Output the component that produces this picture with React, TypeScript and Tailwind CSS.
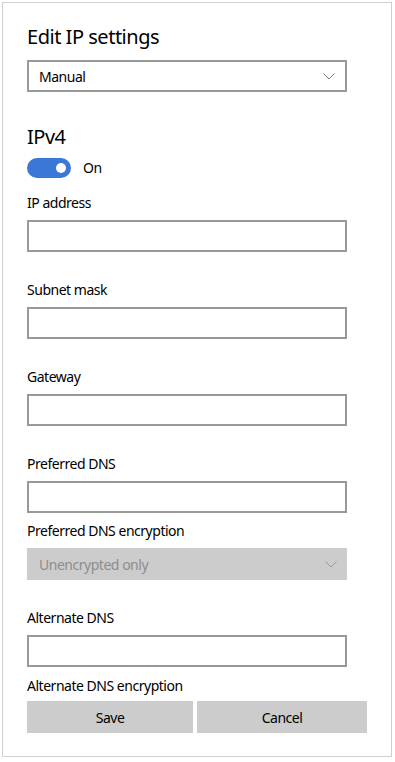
const FONT = "font-['Segoe_UI','Noto_Sans',sans-serif] tracking-[-0.03em]";

function Chevron({ className }: { className: string }) {
  return (
    <svg width="12" height="7" viewBox="0 0 12 7" className={className}>
      <path d="M0.5 0.5 L6 6 L11.5 0.5" fill="none" stroke="currentColor" strokeWidth="1" />
    </svg>
  );
}

function Field({ label, tight }: { label: string; tight?: boolean }) {
  return (
    <div className={tight ? "" : "mb-[28px]"}>
      <p className="h-5 text-[14px] leading-5">{label}</p>
      <div className="mt-[7px] h-8 w-[320px] border-2 border-[#999] bg-white" />
    </div>
  );
}

export default function App() {
  return (
    <div className={`h-[762px] w-[395px] bg-white pl-[2px] pr-[3px] pt-[2px] ${FONT} text-black`}>
      <div className="flex h-[755px] flex-col border border-[#cfcfcf] pl-[24px]">
        <h1 className="mt-[20px] h-7 text-[20px] leading-7">Edit IP settings</h1>

        <div className="mt-[9px] flex h-8 w-[320px] items-center justify-between border-2 border-[#999] pl-[10px] pr-[10px]">
          <span className="text-[14px]">Manual</span>
          <Chevron className="text-[#777]" />
        </div>

        <h2 className="mt-[31px] h-7 text-[20px] leading-7">IPv4</h2>

        <div className="mt-[6px] flex items-center gap-3">
          <div className="flex h-5 w-[44px] items-center justify-end rounded-full bg-[#3a78d8] pr-[5px]">
            <div className="h-[10px] w-[10px] rounded-full bg-white" />
          </div>
          <span className="text-[14px]">On</span>
        </div>

        <div className="mt-[15px]">
          <Field label="IP address" />
          <Field label="Subnet mask" />
          <Field label="Gateway" />
          <Field label="Preferred DNS" tight />

          <p className="mt-[8px] h-5 text-[14px] leading-5">Preferred DNS encryption</p>
          <div className="mt-[7px] flex h-8 w-[320px] items-center justify-between bg-[#cccccc] pl-[12px] pr-[10px]">
            <span className="text-[14px] text-[#8e8e8e]">Unencrypted only</span>
            <Chevron className="text-[#9a9a9a]" />
          </div>

          <div className="mt-[28px]">
            <Field label="Alternate DNS" tight />
          </div>

          <p className="mt-[9px] h-5 text-[14px] leading-5">Alternate DNS encryption</p>
          <div className="mt-[5px] flex gap-[4px]">
            <button className="h-8 w-[166px] bg-[#cccccc] text-[14px]">Save</button>
            <button className="h-8 w-[170px] bg-[#cccccc] text-[14px]">Cancel</button>
          </div>
        </div>
      </div>
    </div>
  );
}
